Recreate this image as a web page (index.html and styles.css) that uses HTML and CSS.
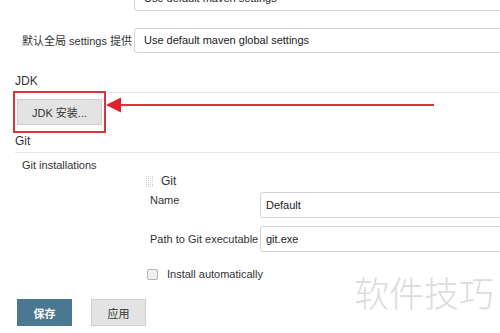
FILE: index.html
```html
<!DOCTYPE html>
<html lang="zh">
<head>
<meta charset="utf-8">
<link rel="stylesheet" href="styles.css">
</head>
<body>
<div class="page">
  <div class="form-row first">
    <div class="label"></div>
    <div class="field">Use default maven settings</div>
  </div>
  <div class="form-row second">
    <div class="label">默认全局 settings 提供</div>
    <div class="field">Use default maven global settings</div>
  </div>

  <div class="section-head jdk">JDK</div>
  <div class="btn-wrap">
    <button class="btn gray jdk-btn">JDK 安装...</button>
    <div class="annot-box"></div>
  </div>

  <div class="section-head git">Git</div>
  <div class="sub-label">Git installations</div>
  <div class="repeated">
    <div class="repeated-head">
      <svg class="grip" width="8" height="11" viewBox="0 0 8 11">
        <g fill="#c8c8c8">
          <rect x="0" y="0" width="1" height="1"/><rect x="2" y="0" width="1" height="1"/><rect x="4" y="0" width="1" height="1"/><rect x="6" y="0" width="1" height="1"/>
          <rect x="0" y="2" width="1" height="1"/><rect x="2" y="2" width="1" height="1"/><rect x="4" y="2" width="1" height="1"/><rect x="6" y="2" width="1" height="1"/>
          <rect x="0" y="4" width="1" height="1"/><rect x="2" y="4" width="1" height="1"/><rect x="4" y="4" width="1" height="1"/><rect x="6" y="4" width="1" height="1"/>
          <rect x="0" y="6" width="1" height="1"/><rect x="2" y="6" width="1" height="1"/><rect x="4" y="6" width="1" height="1"/><rect x="6" y="6" width="1" height="1"/>
          <rect x="0" y="8" width="1" height="1"/><rect x="2" y="8" width="1" height="1"/><rect x="4" y="8" width="1" height="1"/><rect x="6" y="8" width="1" height="1"/>
          <rect x="0" y="10" width="1" height="1"/><rect x="2" y="10" width="1" height="1"/><rect x="4" y="10" width="1" height="1"/><rect x="6" y="10" width="1" height="1"/>
        </g>
      </svg>
      <span class="repeated-title">Git</span>
    </div>
    <div class="inner-row name-row">
      <div class="inner-label">Name</div>
      <div class="field">Default</div>
    </div>
    <div class="inner-row path-row">
      <div class="inner-label">Path to Git executable</div>
      <div class="field">git.exe</div>
    </div>
    <div class="check-row">
      <span class="checkbox"></span>
      <span>Install automatically</span>
    </div>
  </div>

  <div class="actions">
    <button class="btn primary">保存</button>
    <button class="btn gray">应用</button>
  </div>

  <svg class="arrow" width="332" height="18" viewBox="0 0 332 18">
    <line x1="12" y1="9" x2="328" y2="9" stroke="#e0323a" stroke-width="2"/>
    <polygon points="0,9 15,1.5 15,16.5" fill="#e0202a"/>
  </svg>
  <div class="watermark">软件技巧</div>
</div>
</body>
</html>
```
FILE: styles.css
```css
html, body {
  margin: 0;
  padding: 0;
  overflow: hidden;
  background: #fff;
}
body {
  width: 500px;
  height: 333px;
  font-family: "Liberation Sans", Arial, "Noto Sans CJK SC", sans-serif;
  font-size: 11px;
  color: #333;
}
.page {
  position: relative;
  width: 510px;
  padding-left: 15px;
  box-sizing: border-box;
  margin-top: -14px;
}
.form-row {
  display: grid;
  grid-template-columns: 119px 1fr;
  align-items: center;
}
.form-row.second {
  margin-top: 17px;
}
.label {
  padding-left: 7px;
  font-size: 11px;
  margin-top: -1px;
  white-space: nowrap;
}
.field {
  height: 25px;
  box-sizing: border-box;
  border: 1px solid #d3d3d3;
  border-radius: 3px;
  padding: 0 9px;
  line-height: 23px;
  font-size: 11px;
  color: #222;
  background: #fff;
}
.section-head {
  font-size: 12px;
  line-height: 16px;
  padding-bottom: 3px;
  border-bottom: 1px solid #e6e6e6;
  color: #333;
}
.section-head.jdk {
  margin-top: 20px;
}
.section-head.git {
  margin-top: 8px;
}
.btn-wrap {
  position: relative;
  margin-top: 6px;
  margin-left: 2px;
  width: 85px;
}
.btn {
  font-family: "Liberation Sans", Arial, "Noto Sans CJK SC", sans-serif;
  font-size: 11px;
  height: 26px;
  box-sizing: border-box;
  border: 1px solid #cfcfcf;
  border-radius: 0;
  padding: 0;
  display: block;
}
.btn.gray {
  background: #e3e3e3;
  color: #333;
}
.jdk-btn {
  width: 85px;
}
.annot-box {
  position: absolute;
  left: -4px;
  top: -8px;
  width: 93px;
  height: 42px;
  box-sizing: border-box;
  border: 2px solid #d9343b;
}
.sub-label {
  margin-top: 6px;
  padding-left: 7px;
  line-height: 13px;
}
.repeated {
  margin-left: 131px;
  margin-top: 1px;
}
.repeated-head {
  display: flex;
  align-items: center;
  gap: 7px;
  height: 16px;
}
.grip {
  display: block;
}
.repeated-title {
  font-size: 12px;
  color: #333;
}
.inner-row {
  display: grid;
  grid-template-columns: 110px 1fr;
  align-items: center;
  margin-left: 4px;
}
.inner-row .field {
  height: 26px;
  line-height: 24px;
  padding-left: 5px;
}
.name-row {
  margin-top: 3px;
}
.name-row .inner-label {
  align-self: start;
  margin-top: 2px;
}
.path-row {
  margin-top: 8px;
}
.check-row {
  display: flex;
  align-items: center;
  gap: 9px;
  margin-top: 16px;
  margin-left: 1px;
  line-height: 13px;
}
.checkbox {
  width: 9px;
  height: 9px;
  border: 1px solid #b5b5b5;
  border-radius: 2px;
  background: #f0f0f0;
}
.actions {
  display: flex;
  gap: 19px;
  margin-top: 18px;
  margin-left: 2px;
}
.actions .btn {
  width: 55px;
  height: 27px;
}
.btn.primary {
  background: #4b7891;
  border-color: #4b7891;
  color: #fff;
  font-weight: bold;
}
.arrow {
  position: absolute;
  left: 106px;
  top: 110px;
}
.watermark {
  position: absolute;
  left: 354px;
  top: 286px;
  font-family: "Noto Sans CJK SC", sans-serif;
  font-size: 35px;
  line-height: 40px;
  color: #dcdcdc;
  letter-spacing: 0;
  font-weight: 300;
}
```
